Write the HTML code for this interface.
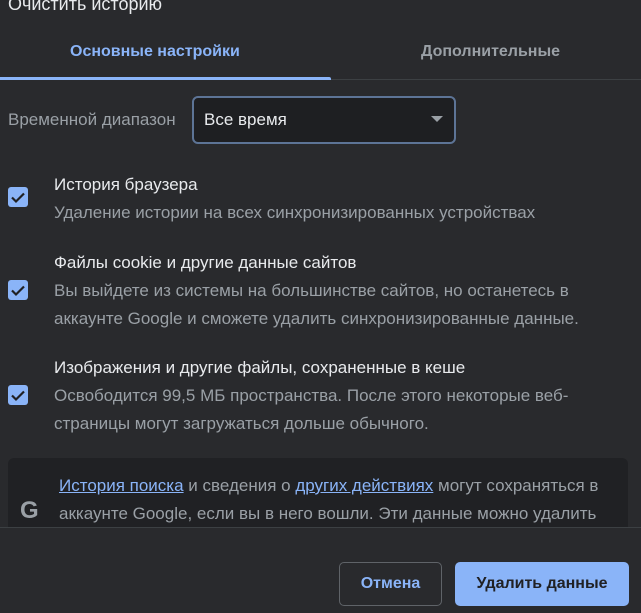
<!DOCTYPE html>
<html><head><meta charset="utf-8"><style>
body{margin:0;width:641px;height:612px;overflow:hidden;background:#292a2d;font-family:"Liberation Sans",sans-serif;position:relative;color:#e8eaed}
.a{position:absolute;white-space:nowrap}
.t{font-size:17px}
.g{color:#9aa0a6;font-size:17px}
.cb{position:absolute;left:8px;width:20px;height:20px;background:#8ab4f8;border-radius:3px}
.cb svg{position:absolute;left:2px;top:2px}
a{color:#8ab4f8;text-decoration:underline}
</style></head><body>
<div class="a" style="left:8px;top:-6px;font-size:18px;color:#e8eaed">Очистить историю</div>
<div class="a" style="left:70px;top:43px;font-size:16px;color:#8ab4f8;font-weight:bold">Основные настройки</div>
<div class="a" style="left:421px;top:43px;font-size:16px;color:#9aa0a6;font-weight:bold">Дополнительные</div>
<div class="a" style="left:0;top:79px;width:641px;height:1px;background:#3c4043"></div>
<div class="a" style="left:0;top:77px;width:331px;height:3px;background:#8ab4f8;border-radius:0 2px 0 0"></div>
<div class="a" style="left:8px;top:110px;font-size:17px;color:#9aa0a6">Временной диапазон</div>
<div class="a" style="left:192px;top:96px;width:260px;height:44px;background:#1e1f22;border:2px solid #5d7496;border-radius:6px"></div>
<div class="a" style="left:204px;top:110px;font-size:17px;color:#e8eaed">Все время</div>
<div class="a" style="left:431px;top:116px;width:0;height:0;border-left:6px solid transparent;border-right:6px solid transparent;border-top:6px solid #9aa0a6"></div>

<div class="cb" style="top:187px"><svg width="16" height="16"><path d="M2 8.5l4 4 8-8" stroke="#202124" stroke-width="2.2" fill="none"/></svg></div>
<div class="a t" style="left:54px;top:175px">История браузера</div>
<div class="a g" style="left:54px;top:203px">Удаление истории на всех синхронизированных устройствах</div>

<div class="cb" style="top:280px"><svg width="16" height="16"><path d="M2 8.5l4 4 8-8" stroke="#202124" stroke-width="2.2" fill="none"/></svg></div>
<div class="a t" style="left:54px;top:253px">Файлы cookie и другие данные сайтов</div>
<div class="a g" style="left:54px;top:281px">Вы выйдете из системы на большинстве сайтов, но останетесь в</div>
<div class="a g" style="left:54px;top:309px">аккаунте Google и сможете удалить синхронизированные данные.</div>

<div class="cb" style="top:385px"><svg width="16" height="16"><path d="M2 8.5l4 4 8-8" stroke="#202124" stroke-width="2.2" fill="none"/></svg></div>
<div class="a t" style="left:54px;top:358px">Изображения и другие файлы, сохраненные в кеше</div>
<div class="a g" style="left:54px;top:386px">Освободится 99,5 МБ пространства. После этого некоторые веб-</div>
<div class="a g" style="left:54px;top:414px">страницы могут загружаться дольше обычного.</div>

<div class="a" style="left:8px;top:458px;width:620px;height:80px;background:#202124;border-radius:6px 6px 0 0"></div>
<div class="a" style="left:20px;top:497px;font-size:24px;font-weight:bold;color:#9aa0a6">G</div>
<div class="a g" style="left:59px;top:476px"><a>История поиска</a> и сведения о <a>других действиях</a> могут сохраняться в</div>
<div class="a g" style="left:59px;top:504px">аккаунте Google, если вы в него вошли. Эти данные можно удалить</div>
<div class="a" style="left:0;top:527px;width:641px;height:85px;background:#292a2d;border-top:1px solid #3c4043"></div>
<div class="a" style="left:339px;top:562px;width:101px;height:42px;border:1px solid #5f6368;border-radius:5px;color:#8ab4f8;font-size:16px;font-weight:bold;text-align:center;line-height:42px">Отмена</div>
<div class="a" style="left:455px;top:562px;width:174px;height:44px;background:#8ab4f8;border-radius:5px;color:#202124;font-size:16px;font-weight:bold;text-align:center;line-height:44px">Удалить данные</div>
</body></html>
